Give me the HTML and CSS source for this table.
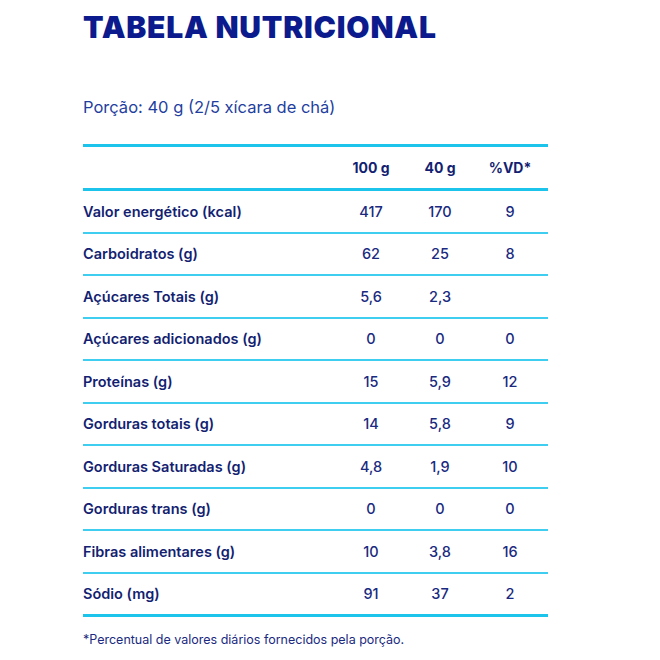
FILE: index.html
```html
<!DOCTYPE html>
<html lang="pt-BR">
<head>
<meta charset="utf-8">
<title>Tabela Nutricional</title>
<link rel="stylesheet" href="styles.css">
</head>
<body>
<main class="page">
  <h1 class="title">TABELA NUTRICIONAL</h1>
  <p class="portion">Porção: 40 g (2/5 xícara de chá)</p>
  <div class="table">
    <div class="row head">
      <div class="label"></div>
      <div class="val">100 g</div>
      <div class="val">40 g</div>
      <div class="val">%VD*</div>
    </div>
    <div class="row"><div class="label">Valor energético (kcal)</div><div class="val">417</div><div class="val">170</div><div class="val">9</div></div>
    <div class="row"><div class="label">Carboidratos (g)</div><div class="val">62</div><div class="val">25</div><div class="val">8</div></div>
    <div class="row"><div class="label">Açúcares Totais (g)</div><div class="val">5,6</div><div class="val">2,3</div><div class="val"></div></div>
    <div class="row"><div class="label">Açúcares adicionados (g)</div><div class="val">0</div><div class="val">0</div><div class="val">0</div></div>
    <div class="row"><div class="label">Proteínas (g)</div><div class="val">15</div><div class="val">5,9</div><div class="val">12</div></div>
    <div class="row"><div class="label">Gorduras totais (g)</div><div class="val">14</div><div class="val">5,8</div><div class="val">9</div></div>
    <div class="row"><div class="label">Gorduras Saturadas (g)</div><div class="val">4,8</div><div class="val">1,9</div><div class="val">10</div></div>
    <div class="row"><div class="label">Gorduras trans (g)</div><div class="val">0</div><div class="val">0</div><div class="val">0</div></div>
    <div class="row"><div class="label">Fibras alimentares (g)</div><div class="val">10</div><div class="val">3,8</div><div class="val">16</div></div>
    <div class="row last"><div class="label">Sódio (mg)</div><div class="val">91</div><div class="val">37</div><div class="val">2</div></div>
  </div>
  <p class="note">*Percentual de valores diários fornecidos pela porção.</p>
</main>
</body>
</html>
```
FILE: styles.css
```css
html, body {
  margin: 0;
  padding: 0;
  background: #ffffff;
}
body {
  font-family: Inter, "Noto Sans", "Liberation Sans", sans-serif;
  color: #16237a;
}
.page {
  width: 465px;
  margin-left: 83px;
  padding-top: 10px;
}
.title {
  margin: 0;
  font-size: 30px;
  line-height: 35px;
  font-weight: 900;
  color: #0b1a8c;
  letter-spacing: 0.8px;
}
.portion {
  margin: 52px 0 0;
  font-size: 16.5px;
  line-height: 20px;
  color: #1f3fa0;
}
.table {
  margin-top: 27px;
  border-top: 3px solid #1cc4ec;
}
.row {
  display: grid;
  grid-template-columns: 1fr 74px 64px 76px;
  align-items: center;
  height: 40.5px;
  border-bottom: 2px solid #3fcdf0;
  font-size: 14.5px;
}
.row.head {
  height: 41px;
  border-bottom: 3px solid #1cc4ec;
  font-size: 14px;
}
.row.last {
  border-bottom: 3px solid #1cc4ec;
}
.label {
  font-weight: 600;
  color: #141f72;
}
.val {
  text-align: center;
  font-weight: 500;
  color: #1a2a80;
}
.head .val {
  font-weight: 700;
  color: #141f72;
}
.note {
  margin: 15px 0 0;
  font-size: 12.5px;
  line-height: 16px;
  color: #1a2a80;
}
```
